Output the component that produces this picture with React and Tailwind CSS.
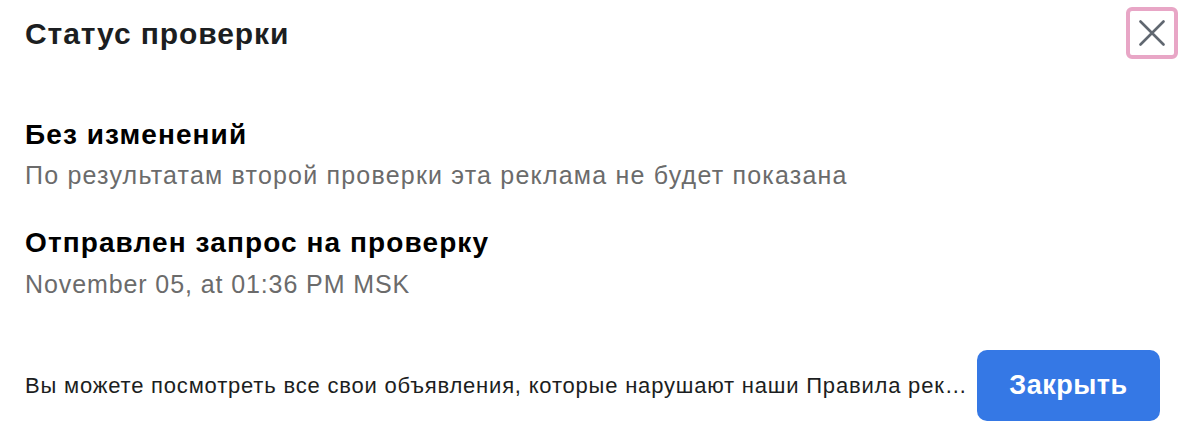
const font = { fontFamily: '"Liberation Sans", Arial, sans-serif' };

function CloseIcon() {
  return (
    <svg width="26" height="26" viewBox="0 0 26 26" fill="none">
      <path
        d="M1.5 1.5L24.5 24.5M24.5 1.5L1.5 24.5"
        stroke="#606770"
        strokeWidth="2.6"
        strokeLinecap="round"
      />
    </svg>
  );
}

export default function App() {
  return (
    <div
      className="w-[1186px] h-[444px] bg-white text-[#1c1e21] overflow-hidden"
      style={font}
    >
      {/* Шапка */}
      <div className="flex items-start justify-between pl-[25px] pr-[8px] pt-[7px]">
        <h1 className="mt-[2px] text-[30px] font-bold leading-[50px] tracking-[0.9px] text-[#1c1e21]">
          Статус проверки
        </h1>
        <button className="w-[52px] h-[52px] rounded-[6px] border-[4px] border-[#e8a6c6] flex items-center justify-center">
          <CloseIcon />
        </button>
      </div>

      {/* Статусы */}
      <div className="px-[25px] pt-[58px]">
        <p className="text-[28px] font-bold leading-[36px] tracking-[1.1px] text-black">
          Без изменений
        </p>
        <p className="text-[25px] leading-[32px] tracking-[1.2px] text-[#6b6b6b] mt-[6px]">
          По результатам второй проверки эта реклама не будет показана
        </p>

        <p className="text-[28px] font-bold leading-[36px] tracking-[1.1px] text-black mt-[34px]">
          Отправлен запрос на проверку
        </p>
        <p className="text-[25px] leading-[32px] tracking-[0.9px] text-[#6b6b6b] mt-[7px]">
          November 05, at 01:36 PM MSK
        </p>
      </div>

      {/* Низ */}
      <div className="flex items-center justify-between pl-[25px] pr-[26px] mt-[50px]">
        <p className="min-w-0 text-[22px] tracking-[0.8px] text-[#1c1e21] truncate mr-[10px]">
          Вы можете посмотреть все свои объявления, которые нарушают наши Правила рекламной деятельности
        </p>
        <button className="shrink-0 w-[183px] h-[71px] rounded-[10px] bg-[#3578e5] text-white text-[27px] tracking-[0.5px] font-bold">
          Закрыть
        </button>
      </div>
    </div>
  );
}
